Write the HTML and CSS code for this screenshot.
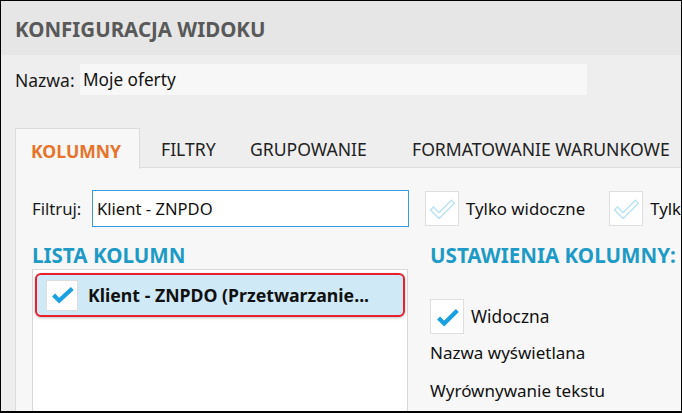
FILE: index.html
```html
<!DOCTYPE html>
<html lang="pl">
<head>
<meta charset="utf-8">
<title>Konfiguracja widoku</title>
<link rel="stylesheet" href="styles.css">
</head>
<body>
<div class="window">
  <div class="header">KONFIGURACJA WIDOKU</div>
  <div class="content">
    <div class="name-row">
      <span class="label name-label">Nazwa:</span>
      <div class="name-input">Moje oferty</div>
    </div>
    <div class="tabs">
      <div class="tab tab-active">KOLUMNY</div>
      <div class="tab tab-2">FILTRY</div>
      <div class="tab tab-3">GRUPOWANIE</div>
      <div class="tab tab-4">FORMATOWANIE WARUNKOWE</div>
    </div>
    <div class="panel">
      <div class="filter-row">
        <span class="label filter-label">Filtruj:</span>
        <div class="filter-input">Klient - ZNPDO</div>
        <div class="check check-empty">
          <svg viewBox="0 0 34 34" width="34" height="34"><path d="M8 18 L14 24 L27 11" fill="none" stroke="#b9e2f5" stroke-width="6" stroke-linecap="square"/><path d="M8 18 L14 24 L27 11" fill="none" stroke="#fff" stroke-width="3" stroke-linecap="square"/></svg>
        </div>
        <span class="check-label">Tylko widoczne</span>
        <div class="check check-empty check-2">
          <svg viewBox="0 0 34 34" width="34" height="34"><path d="M8 18 L14 24 L27 11" fill="none" stroke="#b9e2f5" stroke-width="6" stroke-linecap="square"/><path d="M8 18 L14 24 L27 11" fill="none" stroke="#fff" stroke-width="3" stroke-linecap="square"/></svg>
        </div>
        <span class="check-label">Tylko zaznaczone</span>
      </div>
      <div class="columns">
        <div class="col-left">
          <div class="section-title">LISTA KOLUMN</div>
          <div class="list">
            <div class="list-item">
              <div class="check check-small">
                <svg viewBox="0 0 32 30" width="32" height="30"><path d="M7 15 L13 21 L27 8" fill="none" stroke="#1ba1e2" stroke-width="4.5"/></svg>
              </div>
              <span class="item-text">Klient - ZNPDO (Przetwarzanie...</span>
            </div>
          </div>
        </div>
        <div class="col-right">
          <div class="section-title">USTAWIENIA KOLUMNY:</div>
          <div class="visible-row">
            <div class="check">
              <svg viewBox="0 0 34 34" width="34" height="34"><path d="M8 18 L14 24 L28 10" fill="none" stroke="#1ba1e2" stroke-width="4.5"/></svg>
            </div>
            <span class="check-label setting-label">Widoczna</span>
          </div>
          <div class="setting">Nazwa wyświetlana</div>
          <div class="setting">Wyrównywanie tekstu</div>
        </div>
      </div>
    </div>
  </div>
</div>
</body>
</html>
```
FILE: styles.css
```css
* { box-sizing: border-box; }
html, body { margin: 0; padding: 0; }
body {
  width: 682px;
  height: 413px;
  overflow: hidden;
  font-family: "Noto Sans", "Open Sans", sans-serif;
  color: #111;
  background: #fff;
}
.window {
  width: 682px;
  height: 413px;
  border-top: 1px solid #000;
  border-left: 1px solid #000;
  border-right: 1px solid #000;
  border-bottom: 2px solid #000;
  display: flex;
  flex-direction: column;
  overflow: hidden;
}
.header {
  height: 54px;
  flex: none;
  background: #e6e6e6;
  display: flex;
  align-items: center;
  padding-left: 14px;
  padding-top: 1px;
  font-weight: 700;
  font-size: 20.5px;
  color: #595959;
  white-space: nowrap;
}
.content {
  flex: 1;
  background: #eeeeee;
  display: flex;
  flex-direction: column;
  min-height: 0;
}
.label {
  font-size: 16.7px;
  color: #1a1a1a;
  flex: none;
}
.name-row {
  display: flex;
  align-items: center;
  margin-top: 9px;
  height: 31px;
  padding-left: 14px;
  flex: none;
}
.name-label {
  width: 65px;
  font-size: 17.5px;
}
.name-input {
  width: 507px;
  height: 31px;
  background: #f7f7f7;
  font-size: 17.2px;
  padding-left: 3px;
  display: flex;
  align-items: center;
  flex: none;
}
.tabs {
  display: flex;
  margin-top: 33px;
  margin-left: 14px;
  height: 40px;
  flex: none;
  border-bottom: 1px solid #dcdcdc;
  position: relative;
  z-index: 1;
}
.tab {
  font-size: 17.6px;
  color: #222;
  display: flex;
  align-items: center;
  padding-left: 20px;
  padding-top: 3px;
  white-space: nowrap;
  flex: none;
}
.tab-active {
  width: 125px;
  padding-left: 15px;
  background: #f7f7f7;
  border: 1px solid #dcdcdc;
  border-bottom: none;
  height: 41px;
  color: #e8732b;
  font-weight: 700;
}
.tab-2 { width: 90px; padding-left: 21px; }
.tab-3 { width: 162px; }
.tab-4 { width: 300px; }
.panel {
  flex: 1;
  margin-left: 14px;
  background: #f7f7f7;
  border-left: 1px solid #dcdcdc;
  display: flex;
  flex-direction: column;
  min-height: 0;
}
.filter-row {
  display: flex;
  align-items: center;
  margin-top: 22px;
  padding-left: 16px;
  flex: none;
}
.filter-label {
  width: 60px;
}
.filter-input {
  width: 317px;
  height: 37px;
  background: #fff;
  border: 1px solid #3a9be2;
  font-size: 16.6px;
  padding-left: 4px;
  display: flex;
  align-items: center;
  flex: none;
}
.check {
  width: 34px;
  height: 35px;
  background: #fff;
  border: 1px solid #dedede;
  display: flex;
  align-items: center;
  justify-content: center;
  flex: none;
}
.check svg { display: block; }
.check-empty { margin-left: 16px; }
.check-2 { margin-left: 24px; }
.check-label {
  margin-left: 7px;
  font-size: 16.8px;
  white-space: nowrap;
  flex: none;
}
.columns {
  display: flex;
  margin-top: 14px;
  padding-left: 16px;
  flex: 1;
  min-height: 0;
}
.section-title {
  font-size: 20.6px;
  font-weight: 700;
  color: #1d9bc6;
  height: 28px;
  line-height: 28px;
  white-space: nowrap;
}
.col-left {
  width: 376px;
  display: flex;
  flex-direction: column;
  flex: none;
}
.list {
  flex: 1;
  background: #fff;
  border: 1px solid #d8d8d8;
  border-bottom: none;
  padding: 3px 2px;
}
.list-item {
  height: 44px;
  border: 2px solid #e8202e;
  border-radius: 6px;
  background: #cfe9f6;
  box-shadow: 0 1px 3px rgba(0,0,0,0.25);
  display: flex;
  align-items: center;
  padding-left: 9px;
}
.check-small {
  width: 32px;
  height: 31px;
}
.item-text {
  margin-left: 10px;
  font-size: 17.7px;
  font-weight: 700;
  color: #111;
  white-space: nowrap;
}
.col-right {
  margin-left: 22px;
  display: flex;
  flex-direction: column;
  flex: none;
}
.visible-row {
  display: flex;
  align-items: center;
  margin-top: 30px;
}
.setting-label { font-size: 17.3px; }
.setting {
  font-size: 17px;
  height: 38px;
  line-height: 38px;
  white-space: nowrap;
}
```
